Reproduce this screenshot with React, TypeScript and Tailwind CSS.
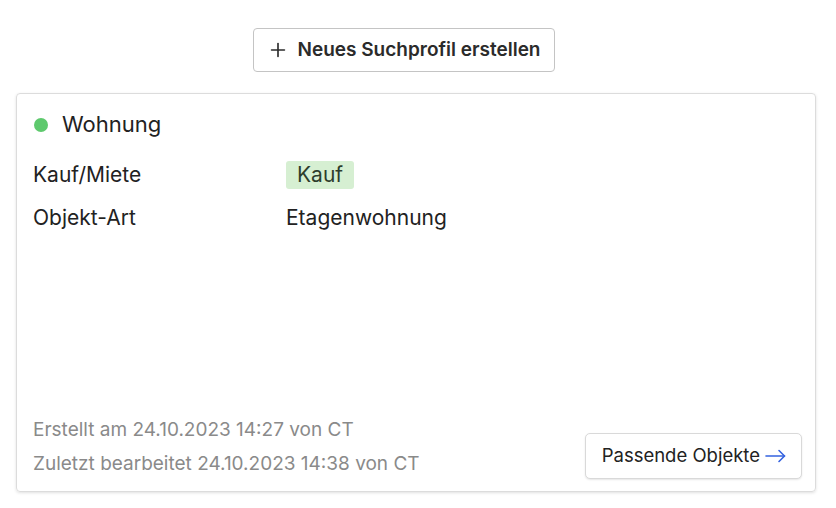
import { Plus } from "lucide-react"

export default function App() {
  const rows = [
    { label: "Kauf/Miete", value: "Kauf", badge: true },
    { label: "Objekt-Art", value: "Etagenwohnung", badge: false },
  ]

  return (
    <div
      className="w-[836px] h-[508px] bg-white text-[#222] pl-4 pr-5 pt-7"
      style={{ fontFamily: "Inter, 'Noto Sans', sans-serif" }}
    >
      <div className="flex justify-center pr-6">
        <button className="flex items-center gap-[8px] h-[44px] w-[302px] justify-center border border-[#c4c4c4] rounded-[4px] bg-white text-[19px] font-semibold text-[#2b2b2b]">
          <Plus size={22} strokeWidth={1.8} />
          Neues Suchprofil erstellen
        </button>
      </div>

      <div className="mt-[21px] h-[399px] border border-[#dcdcdc] rounded-[4px] shadow-[0_1px_3px_rgba(0,0,0,0.12)] flex flex-col pl-4 pr-[13px] pt-[14px] pb-[11px]">
        <div className="flex items-center gap-[14px] pl-[1px]">
          <span className="w-[14px] h-[14px] rounded-full bg-[#5ec96d]" />
          <span className="text-[22px] text-[#222]">Wohnung</span>
        </div>

        <div className="mt-[20px] flex flex-col gap-[15px]">
          {rows.map((r) => (
            <div key={r.label} className="flex items-center h-[28px] text-[21px]">
              <span className="w-[253px] shrink-0">{r.label}</span>
              {r.badge ? (
                <span className="bg-[#d6efd2] text-[#2e3d2c] rounded-[3px] px-[11px] h-[28px] flex items-center">
                  {r.value}
                </span>
              ) : (
                <span>{r.value}</span>
              )}
            </div>
          ))}
        </div>

        <div className="mt-auto flex items-end justify-between">
          <div className="flex flex-col gap-[5px] text-[19px] text-[#8a8a8a] mb-[2px]">
            <span>Erstellt am 24.10.2023 14:27 von CT</span>
            <span>Zuletzt bearbeitet 24.10.2023 14:38 von CT</span>
          </div>
          <button className="flex items-center gap-[5px] h-[46px] pl-4 pr-[15px] border border-[#d9d9d9] rounded-[5px] bg-white shadow-[0_1px_2px_rgba(0,0,0,0.1)] text-[18.5px] text-[#222] mb-[1px]">
            Passende Objekte
            <svg width="21" height="14" viewBox="0 0 21 14" fill="none" stroke="#3563e0" strokeWidth="1.6" strokeLinecap="round" strokeLinejoin="round">
              <path d="M1 7h18.5" />
              <path d="M14 1.5 19.5 7 14 12.5" />
            </svg>
          </button>
        </div>
      </div>
    </div>
  )
}
